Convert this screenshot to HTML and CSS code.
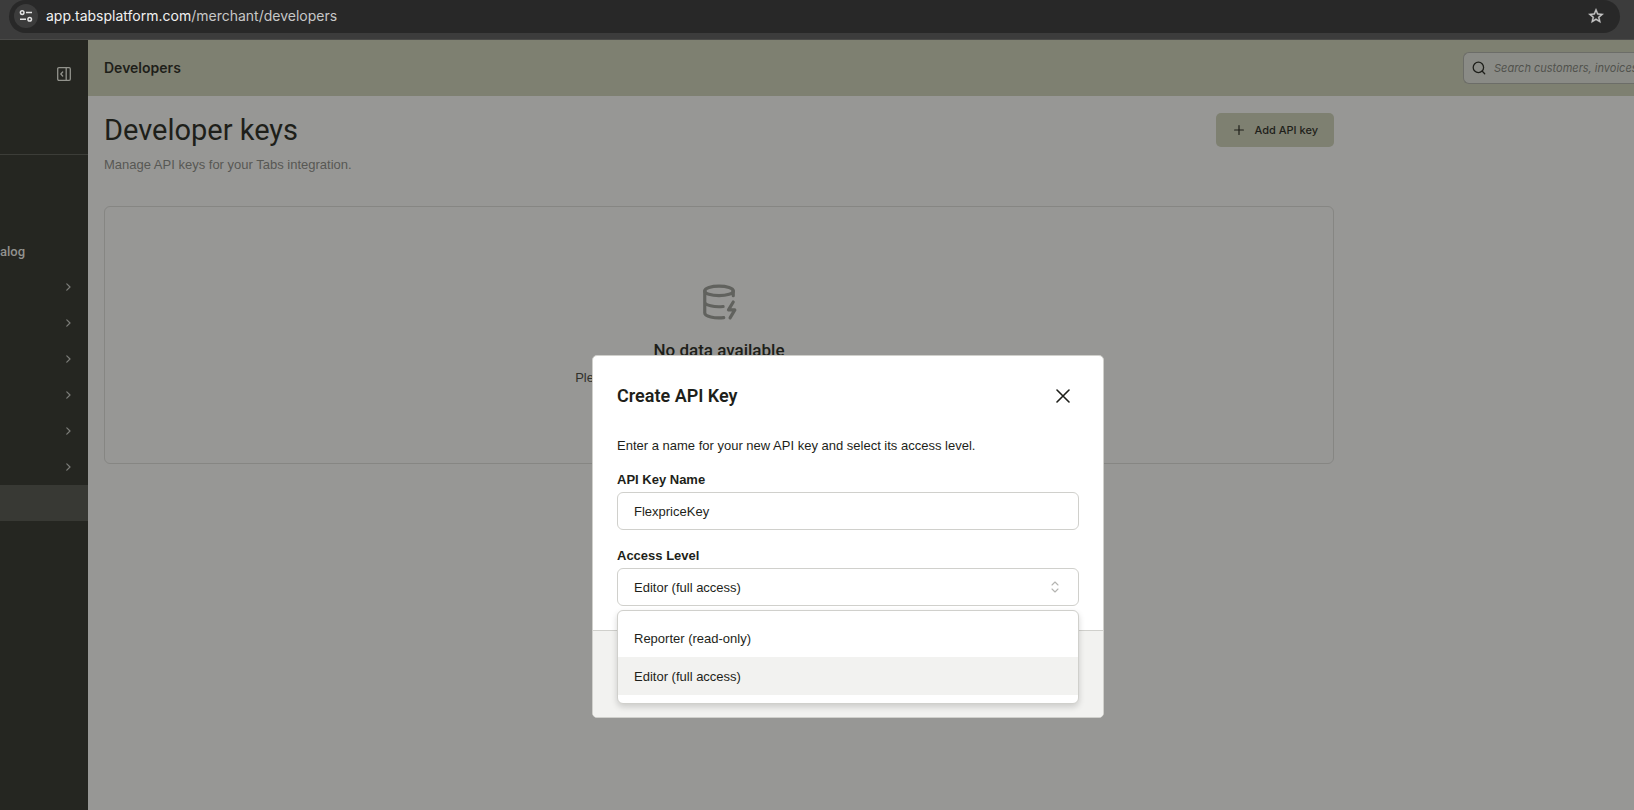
FILE: index.html
```html
<!DOCTYPE html>
<html lang="en">
<head>
<meta charset="utf-8">
<title>Developers</title>
<link rel="stylesheet" href="styles.css">
</head>
<body>
<div class="window">
  <header class="browser">
    <div class="address">
      <button class="site-info" type="button" aria-label="Site information">
        <svg width="14" height="14" viewBox="0 0 14 14" fill="none" stroke="currentColor" stroke-width="1.5"><circle cx="3.2" cy="3.6" r="1.8"/><path d="M7 3.6h6M1 10.2h6"/><circle cx="10.7" cy="10.2" r="1.8"/></svg>
      </button>
      <div class="url"><span class="host">app.tabsplatform.com</span>/merchant/developers</div>
      <button class="bookmark" type="button" aria-label="Bookmark">
        <svg width="18" height="18" viewBox="0 0 24 24" fill="currentColor" stroke="currentColor" stroke-width=".5"><path d="M22 9.24l-7.19-.62L12 2 9.19 8.63 2 9.24l5.46 4.73L5.82 21 12 17.27 18.18 21l-1.63-7.03L22 9.24zM12 15.4l-3.76 2.27 1-4.28-3.32-2.88 4.38-.38L12 6.1l1.71 4.04 4.38.38-3.32 2.88 1 4.28L12 15.4z"/></svg>
      </button>
    </div>
  </header>
  <div class="app">
    <nav class="sidebar">
      <div class="sidebar-top">
        <button class="collapse" type="button" aria-label="Collapse sidebar">
          <svg width="14" height="14" viewBox="0 0 14 14" fill="none" stroke="currentColor" stroke-width="1.3" stroke-linecap="round" stroke-linejoin="round"><rect x=".7" y=".7" width="12.6" height="12.6" rx="1.2"/><path d="M9.2.7v12.6M5.7 5 3.8 7l1.9 2"/></svg>
        </button>
      </div>
      <div class="menu">
        <a class="menu-item text" href="#">alog</a>
        <a class="menu-item" href="#"><svg width="5" height="8" viewBox="0 0 5 8"><path d="M.8.8 4 4 .8 7.2"/></svg></a>
        <a class="menu-item" href="#"><svg width="5" height="8" viewBox="0 0 5 8"><path d="M.8.8 4 4 .8 7.2"/></svg></a>
        <a class="menu-item" href="#"><svg width="5" height="8" viewBox="0 0 5 8"><path d="M.8.8 4 4 .8 7.2"/></svg></a>
        <a class="menu-item" href="#"><svg width="5" height="8" viewBox="0 0 5 8"><path d="M.8.8 4 4 .8 7.2"/></svg></a>
        <a class="menu-item" href="#"><svg width="5" height="8" viewBox="0 0 5 8"><path d="M.8.8 4 4 .8 7.2"/></svg></a>
        <a class="menu-item" href="#"><svg width="5" height="8" viewBox="0 0 5 8"><path d="M.8.8 4 4 .8 7.2"/></svg></a>
        <a class="menu-item active" href="#" aria-label="Developers"></a>
      </div>
    </nav>
    <div class="page">
      <div class="topbar">
        <div class="crumb">Developers</div>
        <label class="search">
          <svg width="14" height="14" viewBox="0 0 14 14" fill="none" stroke="currentColor" stroke-width="1.3" stroke-linecap="round"><circle cx="6.4" cy="6.4" r="5.2"/><path d="m10.3 10.3 2.4 2.4"/></svg>
          <input type="search" aria-label="Search" placeholder="Search customers, invoices">
        </label>
      </div>
      <main class="content">
        <div class="heading">
          <div>
            <h1>Developer keys</h1>
            <p class="lead">Manage API keys for your Tabs integration.</p>
          </div>
          <button class="add" type="button">
            <svg width="10" height="10" viewBox="0 0 10 10" stroke="currentColor" stroke-width="1.2" stroke-linecap="round"><path d="M5 .6v8.8M.6 5h8.8"/></svg>
            Add API key
          </button>
        </div>
        <section class="empty">
          <svg width="38" height="38" viewBox="0 0 24 24" fill="none" stroke="currentColor" stroke-width="2" stroke-linecap="round" stroke-linejoin="round"><ellipse cx="12" cy="5" rx="9" ry="3"/><path d="M3 5v14a9 3 0 0 0 12 2.84M21 5v3M21 12l-3 5h4l-3 5M3 12a9 3 0 0 0 11.59 2.87"/></svg>
          <h2>No data available</h2>
          <p>Please create another API key to get started here.</p>
        </section>
      </main>
    </div>
  </div>
  <div class="overlay">
    <div class="dialog" role="dialog" aria-labelledby="dialog-title">
      <div class="dialog-body">
        <div class="dialog-head">
          <h2 id="dialog-title">Create API Key</h2>
          <button class="close" type="button" aria-label="Close">
            <svg width="14" height="14" viewBox="0 0 14 14" stroke="currentColor" stroke-width="1.6" stroke-linecap="round"><path d="m1 1 12 12M13 1 1 13"/></svg>
          </button>
        </div>
        <p class="intro">Enter a name for your new API key and select its access level.</p>
        <div class="field">
          <label for="key-name">API Key Name</label>
          <input id="key-name" type="text" value="FlexpriceKey">
        </div>
        <div class="field">
          <label for="access">Access Level</label>
          <div class="select">
            <select id="access"><option>Reporter (read-only)</option><option selected>Editor (full access)</option></select>
            <svg class="arrows" width="8" height="12" viewBox="0 0 8 12" fill="none" stroke="currentColor" stroke-width="1.1" stroke-linecap="round" stroke-linejoin="round"><path d="M1 4l3-3 3 3M1 8l3 3 3-3"/></svg>
            <ul class="options" role="listbox" aria-label="Access Level">
              <li role="option" aria-selected="false">Reporter (read-only)</li>
              <li class="selected" role="option" aria-selected="true">Editor (full access)</li>
            </ul>
          </div>
        </div>
      </div>
      <div class="dialog-foot"></div>
    </div>
  </div>
</div>
</body>
</html>
```
FILE: styles.css
```css
* { box-sizing: border-box; }
body { margin: 0; font-family: "Liberation Sans", Arial, sans-serif; font-size: 13px; color: #1e1f1a; }
h1, h2, p, ul { margin: 0; padding: 0; font-weight: 400; }
h1, h2 { font-family: Roboto, sans-serif; }
button, input, select { font: inherit; color: inherit; margin: 0; }
button { padding: 0; border: 0; background: none; }
svg { display: block; flex: none; }

.window { position: relative; display: flex; flex-direction: column; min-height: 100vh; overflow: hidden; }

.browser { padding: 0 14px 6px 9px; background: #3c3c3c; border-bottom: 1px solid #4a4a48; }
.address { display: flex; align-items: center; height: 33px; padding: 0 15px 2px 5px; background: #282828; border-radius: 17px; }
.site-info { display: flex; align-items: center; justify-content: center; width: 24px; height: 24px; border-radius: 50%; background: #3c3c3c; color: #e3e3e3; }
.url { flex: 1; margin-left: 8px; font-family: Inter, sans-serif; font-size: 14px; line-height: 20px; color: #c7c7c7; }
.host { color: #f1f1f1; }
.bookmark { color: #c7c7c7; }

.app { flex: 1; display: flex; }
.sidebar { flex: none; width: 88px; background: #252621; }
.sidebar-top { display: flex; justify-content: flex-end; align-items: flex-start; height: 115px; padding: 27px 17px 0; border-bottom: 1px solid #3c3d38; color: #92938c; }
.menu { padding-top: 78px; }
.menu-item { display: flex; align-items: center; justify-content: flex-end; height: 36px; padding-right: 17px; color: #92928f; text-decoration: none; }
.menu-item.text { justify-content: flex-start; font-family: Roboto, sans-serif; font-size: 13px; font-weight: 500; }
.menu-item path { fill: none; stroke: #7c7d79; stroke-width: 1.2; stroke-linecap: round; stroke-linejoin: round; }
.menu-item.active { background: #383934; }

.page { flex: 1; min-width: 0; background: #979795; }
.topbar { display: flex; align-items: center; justify-content: space-between; height: 56px; padding-left: 16px; background: #7e8071; }
.crumb { font-family: Inter, sans-serif; font-size: 14px; line-height: 20px; font-weight: 600; }
.search { display: flex; align-items: center; gap: 8px; width: 171px; height: 32px; padding-left: 8px; background: #8a8b86; border: 1px solid #6c6d68; border-right: 0; border-radius: 6px 0 0 6px; }
.search input { flex: 1; min-width: 0; padding: 0; border: 0; outline: 0; background: none; font-family: Inter, sans-serif; font-size: 11px; font-style: italic; appearance: none; }
.search input::-webkit-search-cancel-button { display: none; }
.search input::placeholder { color: #51524d; }

.content { max-width: 1262px; padding: 17px 16px; }
.heading { display: flex; justify-content: space-between; align-items: flex-start; }
h1 { font-size: 29px; line-height: 34px; }
.lead { margin-top: 8px; line-height: 20px; color: #575854; }
.add { display: flex; align-items: center; gap: 10px; height: 34px; padding: 0 16px 0 18px; border-radius: 5px; background: #7e8071; font-family: Inter, sans-serif; font-size: 11px; font-weight: 500; }
.empty { display: flex; flex-direction: column; align-items: center; height: 258px; margin-top: 31px; padding-top: 76px; border: 1px solid #868683; border-radius: 6px; }
.empty svg { color: #61625e; }
.empty h2 { margin-top: 17px; font-size: 17px; line-height: 24px; font-weight: 500; }
.empty p { margin-top: 6px; line-height: 20px; color: #30312c; }

.overlay { position: absolute; inset: 0; display: flex; align-items: flex-start; justify-content: center; padding: 355px 0 0 62px; }
.dialog { width: 512px; background: #fff; border: 1px solid #d0d0cc; border-radius: 5px; }
.dialog-body { padding: 24px; }
.dialog-head { display: flex; align-items: center; justify-content: space-between; height: 32px; padding-right: 9px; }
.dialog-head h2 { font-size: 18px; line-height: 24px; font-weight: 600; }
.intro { margin-top: 24px; line-height: 20px; }
.field { display: flex; flex-direction: column; margin-top: 16px; }
.field + .field { margin-top: 18px; }
.field label { height: 20px; line-height: 16px; font-weight: 600; }
.field input, .field select { width: 100%; height: 38px; padding: 0 16px; background: #fff; border: 1px solid #d0d0cc; border-radius: 6px; outline: 0; appearance: none; }
.select { position: relative; }
.arrows { position: absolute; top: 13px; right: 20px; color: #b4b4b1; }
.options { position: absolute; top: 42px; left: 0; right: 0; padding: 8px 0; list-style: none; background: #fff; border: 1px solid #d0d0cc; border-radius: 6px; box-shadow: 0 3px 6px rgba(0, 0, 0, .16); }
.options li { padding: 10px 16px 8px; line-height: 20px; }
.options .selected { background: #f2f2f0; }
.dialog-foot { height: 87px; background: #f2f2f0; border-top: 1px solid #d0d0cc; border-radius: 0 0 4px 4px; }
```
